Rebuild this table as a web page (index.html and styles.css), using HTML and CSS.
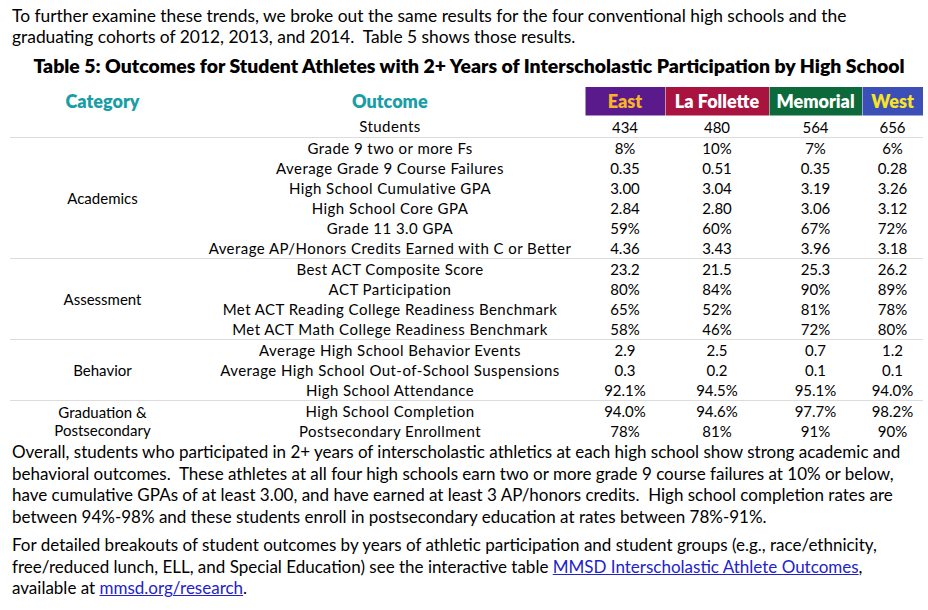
FILE: index.html
```html
<!DOCTYPE html>
<html>
<head>
<meta charset="utf-8">
<link rel="stylesheet" href="styles.css">
</head>
<body>
<div class="page">
  <p class="intro">To further examine these trends, we broke out the same results for the four conventional high schools and the<br>graduating cohorts of 2012, 2013, and 2014.&nbsp; Table 5 shows those results.</p>
  <h2 class="title">Table 5: Outcomes for Student Athletes with 2+ Years of Interscholastic Participation by High School</h2>
  <table class="data">
    <colgroup>
      <col class="c-cat"><col class="c-out"><col class="c-east"><col class="c-lf"><col class="c-mem"><col class="c-west">
    </colgroup>
    <thead>
      <tr class="head">
        <th class="h-label">Category</th>
        <th class="h-label">Outcome</th>
        <th class="h-school east">East</th>
        <th class="h-school lf">La Follette</th>
        <th class="h-school mem">Memorial</th>
        <th class="h-school west">West</th>
      </tr>
    </thead>
    <tbody>
      <tr class="students"><td></td><td class="out">Students</td><td>434</td><td>480</td><td>564</td><td>656</td></tr>
    </tbody>
    <tbody class="group">
      <tr><td rowspan="6" class="cat">Academics</td><td class="out">Grade 9 two or more Fs</td><td>8%</td><td>10%</td><td>7%</td><td>6%</td></tr>
      <tr><td class="out">Average Grade 9 Course Failures</td><td>0.35</td><td>0.51</td><td>0.35</td><td>0.28</td></tr>
      <tr><td class="out">High School Cumulative GPA</td><td>3.00</td><td>3.04</td><td>3.19</td><td>3.26</td></tr>
      <tr><td class="out">High School Core GPA</td><td>2.84</td><td>2.80</td><td>3.06</td><td>3.12</td></tr>
      <tr><td class="out">Grade 11 3.0 GPA</td><td>59%</td><td>60%</td><td>67%</td><td>72%</td></tr>
      <tr><td class="out">Average AP/Honors Credits Earned with C or Better</td><td>4.36</td><td>3.43</td><td>3.96</td><td>3.18</td></tr>
    </tbody>
    <tbody class="group">
      <tr><td rowspan="4" class="cat">Assessment</td><td class="out">Best ACT Composite Score</td><td>23.2</td><td>21.5</td><td>25.3</td><td>26.2</td></tr>
      <tr><td class="out">ACT Participation</td><td>80%</td><td>84%</td><td>90%</td><td>89%</td></tr>
      <tr><td class="out">Met ACT Reading College Readiness Benchmark</td><td>65%</td><td>52%</td><td>81%</td><td>78%</td></tr>
      <tr><td class="out">Met ACT Math College Readiness Benchmark</td><td>58%</td><td>46%</td><td>72%</td><td>80%</td></tr>
    </tbody>
    <tbody class="group">
      <tr><td rowspan="3" class="cat">Behavior</td><td class="out">Average High School Behavior Events</td><td>2.9</td><td>2.5</td><td>0.7</td><td>1.2</td></tr>
      <tr><td class="out">Average High School Out-of-School Suspensions</td><td>0.3</td><td>0.2</td><td>0.1</td><td>0.1</td></tr>
      <tr><td class="out">High School Attendance</td><td>92.1%</td><td>94.5%</td><td>95.1%</td><td>94.0%</td></tr>
    </tbody>
    <tbody class="group">
      <tr><td rowspan="2" class="cat">Graduation &amp;<br>Postsecondary</td><td class="out">High School Completion</td><td>94.0%</td><td>94.6%</td><td>97.7%</td><td>98.2%</td></tr>
      <tr><td class="out">Postsecondary Enrollment</td><td>78%</td><td>81%</td><td>91%</td><td>90%</td></tr>
    </tbody>
  </table>
  <p class="body">Overall, students who participated in 2+ years of interscholastic athletics at each high school show strong academic and<br>behavioral outcomes.&nbsp; These athletes at all four high schools earn two or more grade 9 course failures at 10% or below,<br>have cumulative GPAs of at least 3.00, and have earned at least 3 AP/honors credits.&nbsp; High school completion rates are<br>between 94%-98% and these students enroll in postsecondary education at rates between 78%-91%.</p>
  <p class="body">For detailed breakouts of student outcomes by years of athletic participation and student groups (e.g., race/ethnicity,<br>free/reduced lunch, ELL, and Special Education) see the interactive table <a href="#">MMSD Interscholastic Athlete Outcomes</a>,<br>available at <a href="#">mmsd.org/research</a>.</p>
</div>
</body>
</html>
```

FILE: styles.css
```css
html, body {
  margin: 0;
  padding: 0;
  background: #fff;
}
body {
  font-family: Lato, "Open Sans", "Liberation Sans", sans-serif;
  color: #000;
}
.page {
  padding: 5px 0 0 10px;
  width: 918px;
}
.intro {
  margin: 0 0 0 2px;
  font-size: 17.4px;
  line-height: 21px;
  white-space: nowrap;
}
.title {
  margin: 8px 0 0 0;
  font-size: 19.4px;
  line-height: 22px;
  font-weight: 800;
  text-align: center;
  white-space: nowrap;
}
.data {
  margin-top: 9px;
  border-collapse: collapse;
  table-layout: fixed;
  width: 913px;
  font-size: 15px;
}
.c-cat { width: 185px; }
.c-out { width: 390px; }
.c-east { width: 80px; }
.c-lf { width: 104px; }
.c-mem { width: 93px; }
.c-west { width: 61px; }
.data td, .data th {
  padding: 0;
  text-align: center;
  vertical-align: middle;
  white-space: nowrap;
}
.data td {
  height: 20px;
  line-height: 18px;
}
.data td.out {
  letter-spacing: 0.45px;
}
.head th {
  height: 28px;
  font-size: 18px;
  font-weight: 800;
}
.h-label {
  color: #1a9ea6;
  font-size: 17.5px;
}
.h-school {
  border: 1px solid rgba(255,255,255,0.5);
}
.east { background: #5a1a8c; color: #f7b32a; }
.lf { background: #a8133f; color: #fff; }
.mem { background: #0c6a3a; color: #fff; }
.west { background: #3b4fb6; color: #f8e424; }
.students td {
  height: 21px;
}
.group tr:first-child td {
  border-top: 1px solid #dcdcdc;
}
.cat {
  line-height: 20px;
}
.body {
  margin: 0 0 0 2px;
  font-size: 17px;
  line-height: 21.7px;
  white-space: nowrap;
}
.body + .body {
  margin-top: 6px;
}
a {
  color: #2222cc;
  text-decoration: underline;
}
```
